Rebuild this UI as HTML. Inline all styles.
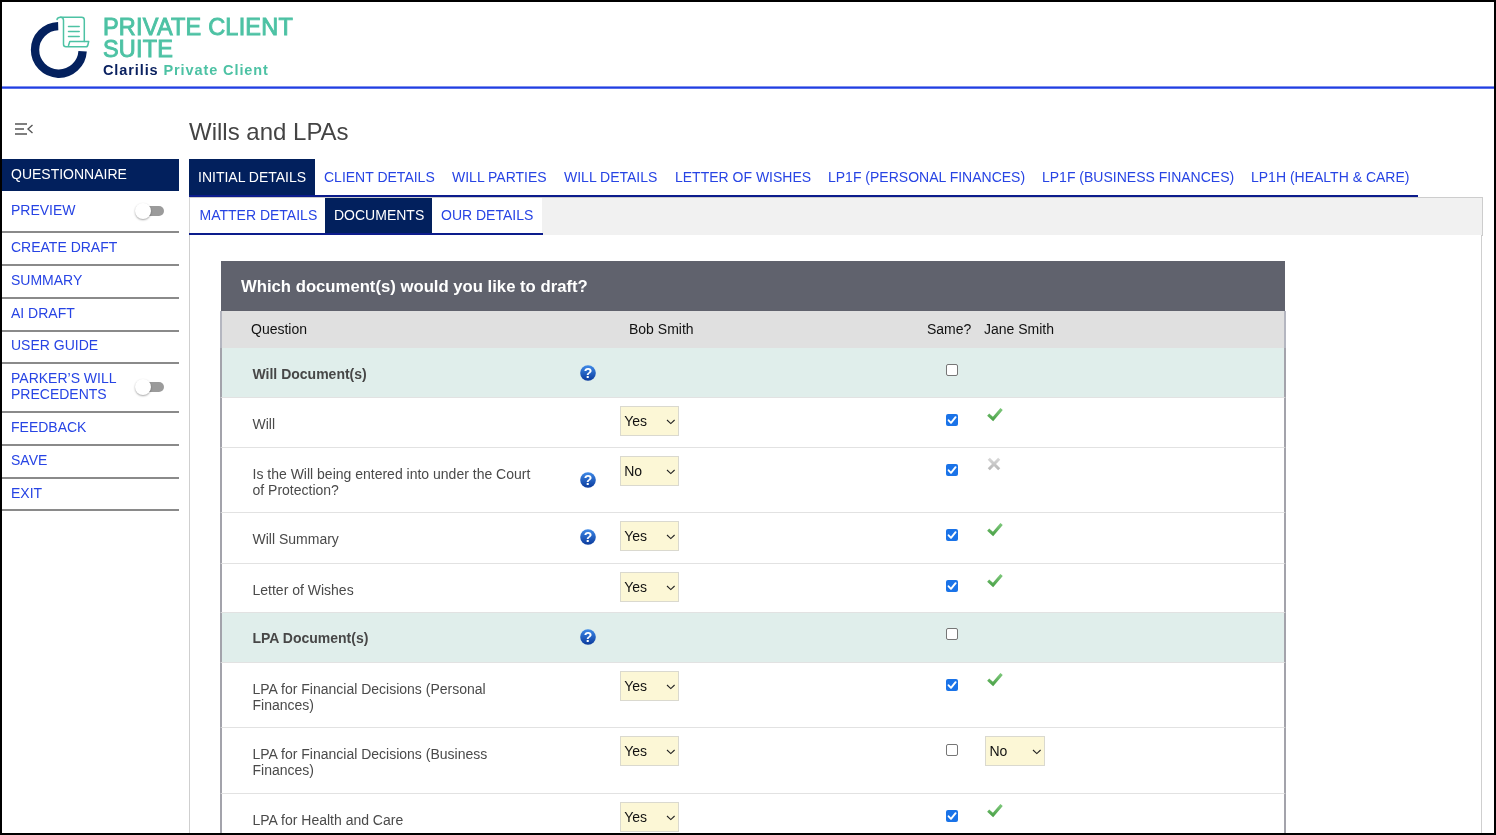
<!DOCTYPE html>
<html><head><meta charset="utf-8">
<style>
*{box-sizing:border-box;margin:0;padding:0}
html,body{width:1496px;height:835px;overflow:hidden;background:#fff;font-family:"Liberation Sans",sans-serif}
html{will-change:transform}
.a{position:absolute}
.frame{position:absolute;left:0;top:0;width:1496px;height:835px;border:2px solid #000;z-index:100;pointer-events:none}
.lnk{color:#2744e4;font-size:14px;white-space:nowrap}
.sbl{position:absolute;left:2px;width:177px;height:2px;background:#8a8a8a}
.sbt{position:absolute;left:11px;font-size:14px;line-height:16px;color:#2744e4;white-space:nowrap}
.tog{position:absolute;width:30px;height:18px}
.tog .tr{position:absolute;left:8px;top:4px;width:21px;height:10px;border-radius:5px;background:#9b9b9b}
.tog .kn{position:absolute;left:0;top:1px;width:16px;height:16px;border-radius:50%;background:#fff;box-shadow:0 1px 2px rgba(0,0,0,.35)}
.tab{position:absolute;top:159px;height:36px;font-size:14px;line-height:16px;padding:10px 9px 0 9px;color:#2744e4;white-space:nowrap}
.tab.on{background:#02205d;color:#fff}
.stab{position:absolute;top:198px;height:35px;font-size:14px;line-height:16px;padding:9.3px 9px 0 9px;color:#2744e4;background:#fff;white-space:nowrap}
.stab.on{background:#02205d;color:#fff}
.row{position:absolute;left:220px;width:1066px;border-left:2px solid #a3a3ab;border-right:2px solid #a3a3ab;background:#fff}
.row.grp{background:#e0eeeb}
.q{position:absolute;left:30.5px;font-size:14px;line-height:16px;color:#4a4a4a;white-space:nowrap}
.grp .q{font-weight:bold;color:#474747}
.help{position:absolute;left:357.7px;width:16px;height:16px}
.sel{position:absolute;left:397.7px;width:59.5px;height:29.5px;background:#fcf7d6;border:1px solid #dad9cf;font-size:14px;color:#111;padding:5.7px 0 0 3.5px;line-height:16px}
.sel svg{position:absolute;left:45.5px;top:12px}
.cb{position:absolute;left:724px;width:12px;height:12px;border-radius:2px}
.cb.off{border:1px solid #767676;background:#fff}
.cb.on{background:#1a73e8}
.cb.on svg{position:absolute;left:0;top:0}
.ok{position:absolute;left:764.5px}
</style></head><body>
<div class="frame"></div>

<!-- header / logo -->
<svg class="a" style="left:20px;top:8px" width="80" height="80" viewBox="0 0 80 80">
  <path d="M38.2 18.1 A23.8 23.8 0 1 0 62.6 43.3" fill="none" stroke="#04215e" stroke-width="8.4"/>
  <g fill="none" stroke="#4dc2a4" stroke-width="1.5" stroke-linejoin="round" stroke-linecap="round">
    <path d="M37 11.5 Q37.5 9.3 40.5 9.3 L61.5 9.3 Q64.3 9.3 64.3 12 L64.3 33.4"/>
    <path d="M40.5 9.3 Q43.5 9.3 43.5 12.5 L43.5 36.3 Q43.5 38.8 46 38.8 L66 38.8 Q67.6 38.8 68 36.5 L68.7 33.4 L49.8 33.4 L48.5 37.5"/>
    <path d="M48.5 18.6 L59.2 18.6 M48.5 23.5 L59.2 23.5 M48.5 28.5 L59.2 28.5"/>
  </g>
</svg>
<div class="a" style="left:103px;top:15.5px;font-size:23.5px;line-height:22.6px;font-weight:normal;-webkit-text-stroke:0.9px #4dc2a4;color:#4dc2a4;letter-spacing:0.2px;white-space:nowrap">PRIVATE CLIENT<br>SUITE</div>
<div class="a" style="left:103px;top:61.5px;font-size:14.5px;line-height:17px;font-weight:bold;color:#4dc2a4;letter-spacing:0.9px;white-space:nowrap"><span style="color:#0a2160">Clarilis</span> Private Client</div>
<div class="a" style="left:2px;top:86px;width:1492px;height:3px;background:linear-gradient(#7f90ee 0,#7f90ee 1px,#213ee2 1px,#213ee2 2px,#5a70ea 2px)"></div>

<!-- sidebar -->
<svg class="a" style="left:14px;top:122px" width="20" height="14" viewBox="0 0 20 14">
  <g stroke="#555" stroke-width="1.35" fill="none">
    <path d="M1 2 L13 2 M1 7 L10 7 M1 12 L13 12"/>
    <path d="M18.5 3 L14 7 L18.5 11"/>
  </g>
</svg>
<div class="a" style="left:2px;top:159px;width:177px;height:32px;background:#02205d"></div>
<div class="sbt" style="top:166px;color:#fff">QUESTIONNAIRE</div>
<div class="sbt" style="top:202px">PREVIEW</div>
<div class="tog" style="left:135px;top:201.5px"><div class="tr"></div><div class="kn"></div></div>
<div class="sbl" style="top:231px"></div>
<div class="sbt" style="top:239px">CREATE DRAFT</div>
<div class="sbl" style="top:264px"></div>
<div class="sbt" style="top:272px">SUMMARY</div>
<div class="sbl" style="top:297px"></div>
<div class="sbt" style="top:305px">AI DRAFT</div>
<div class="sbl" style="top:330px"></div>
<div class="sbt" style="top:337px">USER GUIDE</div>
<div class="sbl" style="top:362px"></div>
<div class="sbt" style="top:370px">PARKER’S WILL<br>PRECEDENTS</div>
<div class="tog" style="left:135px;top:377.5px"><div class="tr"></div><div class="kn"></div></div>
<div class="sbl" style="top:411px"></div>
<div class="sbt" style="top:419px">FEEDBACK</div>
<div class="sbl" style="top:444px"></div>
<div class="sbt" style="top:452px">SAVE</div>
<div class="sbl" style="top:477px"></div>
<div class="sbt" style="top:485px">EXIT</div>
<div class="sbl" style="top:509px"></div>

<!-- title -->
<div class="a" style="left:189px;top:117.5px;font-size:24px;line-height:28px;color:#444;white-space:nowrap">Wills and LPAs</div>

<!-- tabs -->
<div class="tab on" style="left:189px">INITIAL DETAILS</div>
<div class="tab" style="left:315px">CLIENT DETAILS</div>
<div class="tab" style="left:443px">WILL PARTIES</div>
<div class="tab" style="left:555px">WILL DETAILS</div>
<div class="tab" style="left:666px">LETTER OF WISHES</div>
<div class="tab" style="left:819px">LP1F (PERSONAL FINANCES)</div>
<div class="tab" style="left:1033px">LP1F (BUSINESS FINANCES)</div>
<div class="tab" style="left:1242px">LP1H (HEALTH &amp; CARE)</div>
<div class="a" style="left:189px;top:195px;width:1229px;height:2px;background:#0c1c8c"></div>

<!-- subtab panel -->
<div class="a" style="left:189px;top:197px;width:1294px;height:39px;background:#f1f1f1;border:1px solid #cdcdcd"></div>
<div class="a" style="left:189px;top:235px;width:1293px;height:610px;border-left:1px solid #cfcfcf;border-right:1px solid #cfcfcf;background:#fff"></div>
<div class="stab" style="left:189px;padding-left:9.5px;border-left:1px solid #d6d6d6">MATTER DETAILS</div>
<div class="stab on" style="left:325px">DOCUMENTS</div>
<div class="stab" style="left:432px">OUR DETAILS</div>
<div class="a" style="left:189px;top:233px;width:354px;height:2px;background:#0c1c8c"></div>

<!-- table header -->
<div class="a" style="left:220.5px;top:261px;width:1064.5px;height:50px;background:#60626d"></div>
<div class="a" style="left:241px;top:277.3px;font-size:16.7px;line-height:20px;font-weight:bold;color:#fff;white-space:nowrap">Which document(s) would you like to draft?</div>
<div class="a" style="left:220px;top:311px;width:1066px;height:37px;background:#e0e0e0;border-left:2px solid #b4b6c0;border-right:2px solid #b4b6c0"></div>
<div class="a" style="left:251px;top:321px;font-size:14px;line-height:16px;color:#111">Question</div>
<div class="a" style="left:629px;top:321px;font-size:14px;line-height:16px;color:#111">Bob Smith</div>
<div class="a" style="left:927px;top:321px;font-size:14px;line-height:16px;color:#111">Same?</div>
<div class="a" style="left:984px;top:321px;font-size:14px;line-height:16px;color:#111">Jane Smith</div>

<!--ROWS-->
<div class="row grp" style="top:348px;height:49px;">
<div class="q" style="top:18.1px">Will Document(s)</div>
<svg class="help" style="top:17.2px" width="16" height="16" viewBox="0 0 16 16"><defs><linearGradient id="hg0" x1="0" y1="0" x2="0" y2="1"><stop offset="0" stop-color="#3f8ae8"/><stop offset="1" stop-color="#0a3a9c"/></linearGradient></defs><circle cx="8" cy="8" r="7.8" fill="url(#hg0)"/><text x="8.1" y="13.1" text-anchor="middle" font-family="Liberation Sans" font-weight="bold" font-size="14" fill="#fff">?</text></svg>
<div class="cb off" style="top:16.4px"></div>
</div>
<div class="row" style="top:397px;height:50px;border-top:1px solid #e2e2e2;">
<div class="q" style="top:18px">Will</div>
<div class="sel" style="top:8.2px">Yes<svg width="10" height="6" viewBox="0 0 10 6"><path d="M1 1 L4.8 4.6 L8.6 1" fill="none" stroke="#222" stroke-width="1.1"/></svg></div>
<div class="cb on" style="top:16px"><svg width="12" height="12" viewBox="0 0 12 12"><path d="M2.6 6.3 L5 8.8 L9.6 3.2" fill="none" stroke="#fff" stroke-width="1.9" stroke-linecap="round" stroke-linejoin="round"/></svg></div>
<svg class="ok" style="top:10.3px" width="16" height="14" viewBox="0 0 16 14"><defs><linearGradient id="okg1" x1="0" y1="0" x2="0" y2="1"><stop offset="0" stop-color="#7cc77a"/><stop offset="1" stop-color="#4fa54c"/></linearGradient></defs><path d="M1.2 6.7 L6.0 11.0 L14.6 1.0" fill="none" stroke="url(#okg1)" stroke-width="3.1"/></svg>
</div>
<div class="row" style="top:447px;height:65px;border-top:1px solid #e2e2e2;">
<div class="q" style="top:18px">Is the Will being entered into under the Court<br>of Protection?</div>
<svg class="help" style="top:24.2px" width="16" height="16" viewBox="0 0 16 16"><defs><linearGradient id="hg2" x1="0" y1="0" x2="0" y2="1"><stop offset="0" stop-color="#3f8ae8"/><stop offset="1" stop-color="#0a3a9c"/></linearGradient></defs><circle cx="8" cy="8" r="7.8" fill="url(#hg2)"/><text x="8.1" y="13.1" text-anchor="middle" font-family="Liberation Sans" font-weight="bold" font-size="14" fill="#fff">?</text></svg>
<div class="sel" style="top:8.2px">No<svg width="10" height="6" viewBox="0 0 10 6"><path d="M1 1 L4.8 4.6 L8.6 1" fill="none" stroke="#222" stroke-width="1.1"/></svg></div>
<div class="cb on" style="top:16px"><svg width="12" height="12" viewBox="0 0 12 12"><path d="M2.6 6.3 L5 8.8 L9.6 3.2" fill="none" stroke="#fff" stroke-width="1.9" stroke-linecap="round" stroke-linejoin="round"/></svg></div>
<svg class="ok" style="left:764.5px;top:8.5px" width="14" height="14" viewBox="0 0 14 14"><defs><linearGradient id="xg2" x1="0" y1="0" x2="0" y2="1"><stop offset="0" stop-color="#d6d6d6"/><stop offset="1" stop-color="#b9b9b9"/></linearGradient></defs><path d="M1.8 1.8 L12.2 12.2 M12.2 1.8 L1.8 12.2" fill="none" stroke="url(#xg2)" stroke-width="3"/></svg>
</div>
<div class="row" style="top:512px;height:51px;border-top:1px solid #e2e2e2;">
<div class="q" style="top:18px">Will Summary</div>
<svg class="help" style="top:16.2px" width="16" height="16" viewBox="0 0 16 16"><defs><linearGradient id="hg3" x1="0" y1="0" x2="0" y2="1"><stop offset="0" stop-color="#3f8ae8"/><stop offset="1" stop-color="#0a3a9c"/></linearGradient></defs><circle cx="8" cy="8" r="7.8" fill="url(#hg3)"/><text x="8.1" y="13.1" text-anchor="middle" font-family="Liberation Sans" font-weight="bold" font-size="14" fill="#fff">?</text></svg>
<div class="sel" style="top:8.2px">Yes<svg width="10" height="6" viewBox="0 0 10 6"><path d="M1 1 L4.8 4.6 L8.6 1" fill="none" stroke="#222" stroke-width="1.1"/></svg></div>
<div class="cb on" style="top:16px"><svg width="12" height="12" viewBox="0 0 12 12"><path d="M2.6 6.3 L5 8.8 L9.6 3.2" fill="none" stroke="#fff" stroke-width="1.9" stroke-linecap="round" stroke-linejoin="round"/></svg></div>
<svg class="ok" style="top:10.3px" width="16" height="14" viewBox="0 0 16 14"><defs><linearGradient id="okg3" x1="0" y1="0" x2="0" y2="1"><stop offset="0" stop-color="#7cc77a"/><stop offset="1" stop-color="#4fa54c"/></linearGradient></defs><path d="M1.2 6.7 L6.0 11.0 L14.6 1.0" fill="none" stroke="url(#okg3)" stroke-width="3.1"/></svg>
</div>
<div class="row" style="top:563px;height:49px;border-top:1px solid #e2e2e2;">
<div class="q" style="top:18px">Letter of Wishes</div>
<div class="sel" style="top:8.2px">Yes<svg width="10" height="6" viewBox="0 0 10 6"><path d="M1 1 L4.8 4.6 L8.6 1" fill="none" stroke="#222" stroke-width="1.1"/></svg></div>
<div class="cb on" style="top:16px"><svg width="12" height="12" viewBox="0 0 12 12"><path d="M2.6 6.3 L5 8.8 L9.6 3.2" fill="none" stroke="#fff" stroke-width="1.9" stroke-linecap="round" stroke-linejoin="round"/></svg></div>
<svg class="ok" style="top:10.3px" width="16" height="14" viewBox="0 0 16 14"><defs><linearGradient id="okg4" x1="0" y1="0" x2="0" y2="1"><stop offset="0" stop-color="#7cc77a"/><stop offset="1" stop-color="#4fa54c"/></linearGradient></defs><path d="M1.2 6.7 L6.0 11.0 L14.6 1.0" fill="none" stroke="url(#okg4)" stroke-width="3.1"/></svg>
</div>
<div class="row grp" style="top:612px;height:50px;border-top:1px solid #e2e2e2;">
<div class="q" style="top:17.1px">LPA Document(s)</div>
<svg class="help" style="top:16.2px" width="16" height="16" viewBox="0 0 16 16"><defs><linearGradient id="hg5" x1="0" y1="0" x2="0" y2="1"><stop offset="0" stop-color="#3f8ae8"/><stop offset="1" stop-color="#0a3a9c"/></linearGradient></defs><circle cx="8" cy="8" r="7.8" fill="url(#hg5)"/><text x="8.1" y="13.1" text-anchor="middle" font-family="Liberation Sans" font-weight="bold" font-size="14" fill="#fff">?</text></svg>
<div class="cb off" style="top:15.399999999999999px"></div>
</div>
<div class="row" style="top:662px;height:65px;border-top:1px solid #e2e2e2;">
<div class="q" style="top:18px">LPA for Financial Decisions (Personal<br>Finances)</div>
<div class="sel" style="top:8.2px">Yes<svg width="10" height="6" viewBox="0 0 10 6"><path d="M1 1 L4.8 4.6 L8.6 1" fill="none" stroke="#222" stroke-width="1.1"/></svg></div>
<div class="cb on" style="top:16px"><svg width="12" height="12" viewBox="0 0 12 12"><path d="M2.6 6.3 L5 8.8 L9.6 3.2" fill="none" stroke="#fff" stroke-width="1.9" stroke-linecap="round" stroke-linejoin="round"/></svg></div>
<svg class="ok" style="top:10.3px" width="16" height="14" viewBox="0 0 16 14"><defs><linearGradient id="okg6" x1="0" y1="0" x2="0" y2="1"><stop offset="0" stop-color="#7cc77a"/><stop offset="1" stop-color="#4fa54c"/></linearGradient></defs><path d="M1.2 6.7 L6.0 11.0 L14.6 1.0" fill="none" stroke="url(#okg6)" stroke-width="3.1"/></svg>
</div>
<div class="row" style="top:727px;height:66px;border-top:1px solid #e2e2e2;">
<div class="q" style="top:18px">LPA for Financial Decisions (Business<br>Finances)</div>
<div class="sel" style="top:8.2px">Yes<svg width="10" height="6" viewBox="0 0 10 6"><path d="M1 1 L4.8 4.6 L8.6 1" fill="none" stroke="#222" stroke-width="1.1"/></svg></div>
<div class="cb off" style="top:16px"></div>
<div class="sel" style="left:763px;top:8.2px">No<svg width="10" height="6" viewBox="0 0 10 6"><path d="M1 1 L4.8 4.6 L8.6 1" fill="none" stroke="#222" stroke-width="1.1"/></svg></div>
</div>
<div class="row" style="top:793px;height:60px;border-top:1px solid #e2e2e2;">
<div class="q" style="top:18px">LPA for Health and Care</div>
<div class="sel" style="top:8.2px">Yes<svg width="10" height="6" viewBox="0 0 10 6"><path d="M1 1 L4.8 4.6 L8.6 1" fill="none" stroke="#222" stroke-width="1.1"/></svg></div>
<div class="cb on" style="top:16px"><svg width="12" height="12" viewBox="0 0 12 12"><path d="M2.6 6.3 L5 8.8 L9.6 3.2" fill="none" stroke="#fff" stroke-width="1.9" stroke-linecap="round" stroke-linejoin="round"/></svg></div>
<svg class="ok" style="top:10.3px" width="16" height="14" viewBox="0 0 16 14"><defs><linearGradient id="okg8" x1="0" y1="0" x2="0" y2="1"><stop offset="0" stop-color="#7cc77a"/><stop offset="1" stop-color="#4fa54c"/></linearGradient></defs><path d="M1.2 6.7 L6.0 11.0 L14.6 1.0" fill="none" stroke="url(#okg8)" stroke-width="3.1"/></svg>
</div>
<!--/ROWS-->
</body></html>
